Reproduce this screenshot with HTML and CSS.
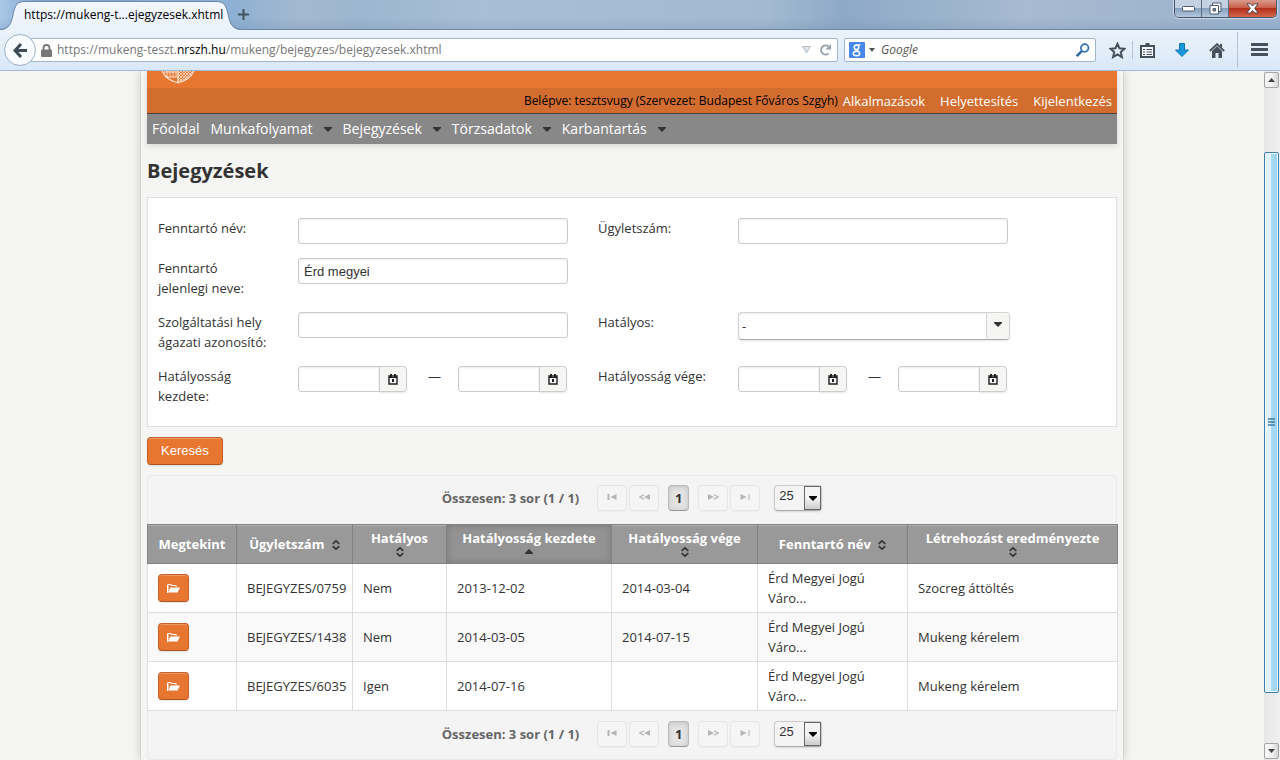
FILE: index.html
```html
<!DOCTYPE html>
<html lang="hu">
<head>
<meta charset="utf-8">
<title>Bejegyzések</title>
<link rel="stylesheet" href="styles.css">
</head>
<body>
<svg class="defs" aria-hidden="true">
  <symbol id="caret" viewBox="0 0 8 5"><path d="M0 0h8v1L4 5 0 1z"/></symbol>
  <symbol id="calendar" viewBox="0 0 10 11"><path d="M1 2h8v8H1z" fill="none" stroke="#222" stroke-width="1.400"/><path d="M2 0h2v3H2zM6 0h2v3H6zM1 3h8v1H1zM4 5h2v3H4z"/></symbol>
  <symbol id="folder" viewBox="0 0 13 9"><path d="M0 9V1l1-1h3l1 1h4.500v2H8.500V2H4.500l-1-1H1.500v5L.8 9z"/><path d="M3.500 3.500H13L10.500 8.500H1z"/></symbol>
  <symbol id="sort" viewBox="0 0 8 10"><path d="M.7 3.800 4 .8l3.300 3M.7 6.200l3.300 3 3.300-3" fill="none" stroke="#333" stroke-width="1.600"/></symbol>
  <symbol id="first" viewBox="0 0 10 6"><path d="M0 0h2v6H0zM9 0v6L3 3z"/></symbol>
  <symbol id="prev" viewBox="0 0 11 6"><path d="M5 .7 1 3l4 2.300" fill="none" stroke="#b5b5b5" stroke-width="1.300"/><path d="M11 0v6L5 3z"/></symbol>
  <symbol id="next" viewBox="0 0 11 6"><path d="M6 .7 10 3 6 5.300" fill="none" stroke="#b5b5b5" stroke-width="1.300"/><path d="M0 0v6l6-3z"/></symbol>
  <symbol id="last" viewBox="0 0 10 6"><path d="M8 0h1v6H8zM0 0v6l6-3z"/></symbol>
</svg>

<header class="browser">
  <div class="titlebar">
    <div class="tab">
      <svg class="tab-shape" width="242" height="30" viewBox="0 0 242 30" aria-hidden="true">
        <defs><linearGradient id="tabfill" x2="0" y2="1"><stop offset="0" stop-color="#f3f7fc"/><stop offset="1" stop-color="#eaf2fb"/></linearGradient></defs>
        <path d="M0 30C9 30 11 24 13 15 15 5 17 1.500 25 1.500H216C224 1.500 226 5 228 14 230 24 232 30 242 30z" fill="url(#tabfill)"/>
        <path d="M0 29.500C9 29 11 24 13 15 15 5 17 1.500 25 1.500H216C224 1.500 226 5 228 14 230 24 232 29 242 29.500" fill="none" stroke="#6c87a8"/>
      </svg>
      <span class="tab-title">https://mukeng-t...ejegyzesek.xhtml</span>
    </div>
    <button class="icon-btn newtab" aria-label="Új lap"><svg width="11" height="11" viewBox="0 0 11 11"><path d="M5.500 0v11M0 5.500h11" stroke="#40525f" stroke-width="2"/></svg></button>
    <div class="window-buttons">
      <button aria-label="Kis méret"><svg width="13" height="7" viewBox="0 0 13 7"><rect x=".5" y="1.500" width="12" height="4.500" rx="1" fill="#fff" stroke="#4c5b6f"/></svg></button>
      <button aria-label="Előző méret"><svg width="13" height="13" viewBox="0 0 13 13"><path d="M3.500 1h8.500v8.500H3.500z" fill="#fff" stroke="#4c5b6f"/><path d="M1 3.500h8.500V12H1z" fill="#fff" stroke="#4c5b6f"/><path d="M4 6.500h2.500V9H4z" fill="#7e95b3" stroke="#4c5b6f"/></svg></button>
      <button class="close" aria-label="Bezárás"><svg width="13" height="11" viewBox="0 0 13 11"><path d="M1 .8h3.500l2 2.200 2-2.200H12L8.700 5.300l3.500 4.700H8.500l-2-2.400-2 2.400H.8l3.500-4.700z" fill="#fff" stroke="#53414a"/></svg></button>
    </div>
  </div>
  <div class="toolbar">
    <button class="back" aria-label="Vissza"><svg width="15" height="15" viewBox="0 0 15 15"><path d="M8 1 2 7.500 8 14M2.500 7.500H14" fill="none" stroke="#3c4b57" stroke-width="3"/></svg></button>
    <div class="urlbar">
      <svg width="11" height="13" viewBox="0 0 11 13"><path d="M2.500 6V4a3 3 0 0 1 6 0v2" fill="none" stroke="#777" stroke-width="1.800"/><rect y="5.500" width="11" height="7.500" rx="1" fill="#777"/></svg>
      <span class="url">https://mukeng-teszt.<b>nrszh.hu</b>/mukeng/bejegyzes/bejegyzesek.xhtml</span>
      <svg width="9" height="8" viewBox="0 0 9 8"><path d="M.5.5h8L4.500 7z" fill="#dde2e6" stroke="#b5bdc4"/></svg>
      <button class="icon-btn" aria-label="Újratöltés"><svg width="12" height="12" viewBox="0 0 12 12"><path d="M9.500 9.500a4.500 4.500 0 1 1 0-7" fill="none" stroke="#98a2ad" stroke-width="2"/><path d="M12 0v5.500H6.500z" fill="#98a2ad"/></svg></button>
    </div>
    <label class="searchbar">
      <svg width="16" height="16" viewBox="0 0 16 16"><rect width="16" height="16" rx="1" fill="#4787ee"/><circle cx="7.500" cy="5.200" r="2.300" fill="none" stroke="#fff" stroke-width="1.500"/><ellipse cx="7.500" cy="11.500" rx="3.200" ry="2.200" fill="none" stroke="#fff" stroke-width="1.400"/><path d="M8 2.800h3.500M7 7.500c-1.500 1 2 1 2.500 2" fill="none" stroke="#fff" stroke-width="1.300"/></svg>
      <svg width="6" height="4" viewBox="0 0 6 4"><path d="M0 0h6L3 4z" fill="#555"/></svg>
      <input type="text" placeholder="Google" aria-label="Google keresés">
      <svg width="14" height="14" viewBox="0 0 14 14"><circle cx="8.700" cy="5" r="3.800" fill="none" stroke="#3a78b4" stroke-width="1.800"/><path d="M6 7.800.8 13" stroke="#2f6ba8" stroke-width="2.500"/></svg>
    </label>
    <div class="tools">
      <button class="icon-btn" aria-label="Könyvjelző"><svg width="17" height="17" viewBox="0 0 17 17"><path d="m8.500 1.800 2 4.500 5 .5-3.700 3.300 1.100 5-4.400-2.600-4.400 2.600 1.100-5L1.500 6.800l5-.5z" fill="none" stroke="#44505b" stroke-width="2"/></svg></button>
      <i class="tool-sep"></i>
      <button class="icon-btn" aria-label="Könyvjelzők"><svg width="15" height="15" viewBox="0 0 15 15"><path d="M1 3h13v11H1z" fill="#f4f8fc" stroke="#44505b" stroke-width="2"/><path d="M3 2h2l1-2h3l1 2h2v2H3z" fill="#44505b"/><path d="M3 6.500h2M6.500 6.500H12M3 9h2M6.500 9H12M3 11.500h2M6.500 11.500H12" stroke="#44505b"/></svg></button>
      <button class="icon-btn" aria-label="Letöltések"><svg width="14" height="14" viewBox="0 0 14 14"><path d="M4.500.5h5V7h4L7 13.500.5 7h4z" fill="#1898dc" stroke="#0c7abb"/></svg></button>
      <button class="icon-btn" aria-label="Kezdőlap"><svg width="16" height="15" viewBox="0 0 16 15"><path d="M.8 8 8 1.200 15.200 8" fill="none" stroke="#44505b" stroke-width="1.800"/><path d="M3 8l5-5 5 5v7H9.500v-5h-3v5H3zM11 1h2v4l-2-2z" fill="#44505b"/></svg></button>
    </div>
    <button class="icon-btn menu" aria-label="Menü"><svg width="17" height="14" viewBox="0 0 17 14"><path d="M1 1.500h15M1 6.500h15M1 11.500h15" stroke="#44505b" stroke-width="3" stroke-linecap="round"/></svg></button>
  </div>
</header>

<div class="viewport">
  <div class="scroll-area">
    <div class="page">
      <div class="banner">
        <div class="brand"><svg width="36" height="14" viewBox="0 0 36 14" aria-hidden="true">
          <defs><pattern id="hatch" width="3" height="3" patternUnits="userSpaceOnUse"><path d="M0 0l3 3M3 0L0 3" stroke="#fbe6d6" stroke-width=".8"/></pattern><pattern id="bars" width="3" height="6" patternUnits="userSpaceOnUse"><path d="M1 0v6" stroke="#f8d3b8"/></pattern></defs>
          <path d="M18 0h15Q28 10 18 11z" fill="url(#hatch)"/><path d="M4 0h14v6H5z" fill="url(#bars)"/>
          <path d="M2 0Q7 10 18 11.500 29 10 34 0M18 0v12.500M4 1h14M5 6h13" fill="none" stroke="#fbe6d6" stroke-width="1.200"/></svg></div>
        <div class="userbar">
          <span class="who">Belépve: tesztsvugy (Szervezet: Budapest Főváros Szgyh)</span>
          <a href="#">Alkalmazások</a><a href="#">Helyettesítés</a><a href="#">Kijelentkezés</a>
        </div>
        <nav class="nav">
          <a href="#">Főoldal</a>
          <a href="#">Munkafolyamat<svg class="caret"><use href="#caret"/></svg></a>
          <a href="#">Bejegyzések<svg class="caret"><use href="#caret"/></svg></a>
          <a href="#">Törzsadatok<svg class="caret"><use href="#caret"/></svg></a>
          <a href="#">Karbantartás<svg class="caret"><use href="#caret"/></svg></a>
        </nav>
      </div>

      <h1>Bejegyzések</h1>

      <form class="panel">
        <div class="row">
          <label for="f1">Fenntartó név:</label><div class="field"><input class="text" id="f1" type="text"></div>
          <label for="f2">Ügyletszám:</label><div class="field"><input class="text" id="f2" type="text"></div>
        </div>
        <div class="row">
          <label for="f3">Fenntartó jelenlegi neve:</label><div class="field"><input class="text" id="f3" type="text" value="Érd megyei"></div>
        </div>
        <div class="row">
          <label for="f4">Szolgáltatási hely ágazati azonosító:</label><div class="field"><input class="text" id="f4" type="text"></div>
          <label for="f5">Hatályos:</label>
          <div class="field"><div class="combo"><select id="f5"><option>-</option></select><span class="combo-arrow"><svg class="caret"><use href="#caret"/></svg></span></div></div>
        </div>
        <div class="row">
          <label for="f6">Hatályosság kezdete:</label>
          <div class="field range">
            <div class="date"><input id="f6" type="text"><button type="button" aria-label="Naptár"><svg class="cal"><use href="#calendar"/></svg></button></div>
            <span class="dash">—</span>
            <div class="date"><input type="text" aria-label="Hatályosság kezdete, vége"><button type="button" aria-label="Naptár"><svg class="cal"><use href="#calendar"/></svg></button></div>
          </div>
          <label for="f7">Hatályosság vége:</label>
          <div class="field range">
            <div class="date"><input id="f7" type="text"><button type="button" aria-label="Naptár"><svg class="cal"><use href="#calendar"/></svg></button></div>
            <span class="dash">—</span>
            <div class="date"><input type="text" aria-label="Hatályosság vége, vége"><button type="button" aria-label="Naptár"><svg class="cal"><use href="#calendar"/></svg></button></div>
          </div>
        </div>
      </form>

      <button class="primary search">Keresés</button>

      <section>
        <div class="pager pager-top">
          <span class="total">Összesen: 3 sor (1 / 1)</span>
          <div class="pages">
            <div class="pair"><button disabled aria-label="Első"><svg class="pg"><use href="#first"/></svg></button><button disabled aria-label="Előző"><svg class="pg"><use href="#prev"/></svg></button></div>
            <button class="current">1</button>
            <div class="pair"><button disabled aria-label="Következő"><svg class="pg"><use href="#next"/></svg></button><button disabled aria-label="Utolsó"><svg class="pg"><use href="#last"/></svg></button></div>
          </div>
          <div class="size"><select aria-label="Sorok száma"><option>25</option></select><span class="size-arrow"><svg class="caret"><use href="#caret"/></svg></span></div>
        </div>
        <table>
          <colgroup><col class="c1"><col class="c2"><col class="c3"><col class="c4"><col class="c5"><col class="c6"><col class="c7"></colgroup>
          <thead>
            <tr>
              <th>Megtekint</th>
              <th>Ügyletszám <svg class="sort"><use href="#sort"/></svg></th>
              <th class="stack">Hatályos <svg class="sort"><use href="#sort"/></svg></th>
              <th class="stack sorted">Hatályosság kezdete <svg class="sort up" viewBox="0 0 8 10"><path d="M0 7V6l4-4 4 4v1z"/></svg></th>
              <th class="stack">Hatályosság vége <svg class="sort"><use href="#sort"/></svg></th>
              <th>Fenntartó név <svg class="sort"><use href="#sort"/></svg></th>
              <th class="stack">Létrehozást eredményezte <svg class="sort"><use href="#sort"/></svg></th>
            </tr>
          </thead>
          <tbody>
            <tr><td><button class="primary view" aria-label="Megtekint"><svg class="folder"><use href="#folder"/></svg></button></td><td>BEJEGYZES/0759</td><td>Nem</td><td>2013-12-02</td><td>2014-03-04</td><td>Érd Megyei Jogú Váro...</td><td>Szocreg áttöltés</td></tr>
            <tr><td><button class="primary view" aria-label="Megtekint"><svg class="folder"><use href="#folder"/></svg></button></td><td>BEJEGYZES/1438</td><td>Nem</td><td>2014-03-05</td><td>2014-07-15</td><td>Érd Megyei Jogú Váro...</td><td>Mukeng kérelem</td></tr>
            <tr><td><button class="primary view" aria-label="Megtekint"><svg class="folder"><use href="#folder"/></svg></button></td><td>BEJEGYZES/6035</td><td>Igen</td><td>2014-07-16</td><td></td><td>Érd Megyei Jogú Váro...</td><td>Mukeng kérelem</td></tr>
          </tbody>
        </table>
        <div class="pager pager-bottom">
          <span class="total">Összesen: 3 sor (1 / 1)</span>
          <div class="pages">
            <div class="pair"><button disabled aria-label="Első"><svg class="pg"><use href="#first"/></svg></button><button disabled aria-label="Előző"><svg class="pg"><use href="#prev"/></svg></button></div>
            <button class="current">1</button>
            <div class="pair"><button disabled aria-label="Következő"><svg class="pg"><use href="#next"/></svg></button><button disabled aria-label="Utolsó"><svg class="pg"><use href="#last"/></svg></button></div>
          </div>
          <div class="size"><select aria-label="Sorok száma"><option>25</option></select><span class="size-arrow"><svg class="caret"><use href="#caret"/></svg></span></div>
        </div>
      </section>
    </div>
  </div>
  <div class="scrollbar" aria-hidden="true">
    <span class="sb-btn"><svg width="7" height="4" viewBox="0 0 7 4"><path d="M0 4h7L3.500 0z" fill="#444"/></svg></span>
    <span class="sb-before"></span>
    <span class="sb-thumb"><svg width="7" height="8" viewBox="0 0 7 8"><path d="M0 1h7M0 4h7M0 7h7" stroke="#3f7ea6" stroke-width="1.500"/></svg></span>
    <span class="sb-after"></span>
    <span class="sb-btn"><svg width="7" height="4" viewBox="0 0 7 4"><path d="M0 0h7L3.500 4z" fill="#444"/></svg></span>
  </div>
</div>
</body>
</html>
```
FILE: styles.css
```css
* { box-sizing: border-box; }
body {
  margin: 0;
  height: 100vh;
  display: flex;
  flex-direction: column;
  overflow: hidden;
  background: #f5f5f3;
  color: #333;
  font: 13px/20px "Open Sans", sans-serif;
}
button, input, select { font: inherit; margin: 0; }
button { padding: 0; }
svg { display: block; flex: none; }
.defs { position: absolute; width: 0; height: 0; }

/* browser window */
.browser { flex: none; font: 12px/20px "Open Sans", sans-serif; }
.titlebar {
  display: flex;
  align-items: stretch;
  height: 30px;
  border-bottom: 1px solid #6c87a8;
  background:
    linear-gradient(rgba(255,255,255,0) 60%, rgba(70,100,135,.12)),
    linear-gradient(90deg, #a9c8e8 0, #7fa3cb 40px, #8db0d3 230px, #a3b8d0 300px, #9db5d0 360px, #a8bed6 480px, #a2b9d1 60%, #8ea9c7 66%, #a6bad1 80%, #9fb5cd 92%, #9ab4d2);
}
.tab { position: relative; width: 242px; height: 30px; padding: 5px 24px; margin-right: -4px; }
.tab-shape { position: absolute; left: 0; top: 0; }
.tab-title { position: relative; display: block; color: #000; white-space: nowrap; }
.icon-btn { display: grid; place-items: center; border: 0; background: none; }
.newtab { width: 11px; }
.window-buttons { display: flex; height: 18px; margin: 0 3px 0 auto; border: 1px solid #47566d; border-top: 0; border-radius: 0 0 5px 5px; overflow: hidden; box-shadow: 0 0 1px 1px rgba(255,255,255,.5); }
.window-buttons button { display: grid; place-items: center; width: 27px; border: 0; border-right: 1px solid #5b6b80; background: linear-gradient(#c3d1e2 45%, #86a0be 50%, #b4c8de); }
.window-buttons button.close { width: 47px; border: 0; background: linear-gradient(#dc9b8c, #c8604c 45%, #b5301c 50%, #d4644a); }

.toolbar {
  display: flex;
  align-items: center;
  height: 41px;
  padding-left: 4px;
  border-bottom: 1px solid #a3b8d2;
  background: linear-gradient(#ebf3fc, #d9e8f7);
}
.back { display: grid; place-items: center; position: relative; z-index: 1; width: 32px; height: 32px; margin-right: -6px; border: 1px solid #9ab0c9; border-radius: 50%; background: #f8fbfe; }
.urlbar, .searchbar { display: flex; align-items: center; height: 24px; border: 1px solid #a2b5ca; border-radius: 2px; background: #fff; }
.urlbar { flex: 1; padding: 0 6px 0 10px; margin-right: 6px; }
.url { flex: 1; margin-left: 5px; color: #777; white-space: nowrap; }
.url b { color: #000; font-weight: 400; }
.urlbar .icon-btn { margin-left: 8px; }
.searchbar { width: 252px; gap: 6px; padding: 0 5px 0 4px; }
.searchbar input { flex: 1; min-width: 0; border: 0; padding: 0; outline: 0; background: none; }
.searchbar > svg:nth-of-type(2) { margin-left: -2px; }
.searchbar input::placeholder { color: #555; font-style: italic; opacity: 1; }
.tools { display: flex; align-items: center; margin: 0 11px 0 12px; }
.tools .icon-btn { width: 18px; height: 24px; }
.tools .icon-btn + .icon-btn { margin-left: 17px; }
.tool-sep { width: 1px; height: 18px; margin: 0 5px 0 6px; background: #b3c3d5; }
.menu { width: 43px; height: 36px; border-left: 1px solid #b3c3d5; }

/* document area */
.viewport { flex: 1; min-height: 0; display: flex; }
.scroll-area { flex: 1; overflow: hidden; }
.page {
  max-width: 982px;
  min-height: 100%;
  margin: 0 auto;
  padding: 0 6px;
  box-shadow: 0 0 10px rgba(0,0,0,.2), 0 0 1px rgba(0,0,0,.3);
}
.banner { box-shadow: 0 2px 6px rgba(0,0,0,.12); }
.brand { height: 17px; padding-left: 13px; background: #e77631; }
.userbar { display: flex; justify-content: flex-end; align-items: center; height: 26px; padding-right: 5px; background: #d26d2f; border-bottom: 1px solid #47423e; }
.userbar a { color: #fff; text-decoration: none; margin-left: 15px; }
.userbar .who { color: #000; font-size: 12px; }
.userbar .who + a { margin-left: 5px; }
.nav { display: flex; align-items: center; gap: 11px; height: 30px; padding-left: 5px; background: #888; font-size: 14px; }
.nav a { display: flex; align-items: center; color: #fff; text-decoration: none; }
.caret { width: 8px; height: 5px; fill: #333; }
.nav .caret { margin-left: 11px; }

h1 { margin: 12px 0 11px; font-size: 20px; line-height: 30px; }

.panel { padding: 13px 10px; border: 1px solid #ddd; background: #fff; }
.row { display: grid; grid-template-columns: 112px 270px 114px 272px; column-gap: 28px; padding: 7px 0; align-items: start; }
.row label:nth-of-type(2) { margin-left: 2px; }
.text, .date input { height: 26px; padding: 0 5px; border: 1px solid #ccc; border-radius: 3px; background: #fff; box-shadow: inset 0 1px 2px rgba(0,0,0,.08); color: #333; font-family: "Liberation Sans", sans-serif; }
.text { display: block; width: 270px; }
.range { display: flex; justify-content: space-between; max-width: 269px; }
.dash { margin-left: 4px; }
.date { display: flex; }
.date input { width: 82px; border-radius: 3px 0 0 3px; }
.date button { display: grid; place-items: center; width: 28px; height: 26px; margin-left: -1px; border: 1px solid #ccc; border-radius: 0 4px 4px 0; background: #f5f5f3; box-shadow: 0 1px 2px rgba(0,0,0,.1); }
.cal { width: 10px; height: 11px; fill: #222; }
.combo { display: grid; width: 272px; height: 28px; border: 1px solid #d2d2d2; border-bottom-color: #aaa; border-radius: 4px; box-shadow: 0 1px 2px rgba(0,0,0,.1), inset 0 1px 2px rgba(0,0,0,.08); }
.combo select, .size select { grid-area: 1 / 1; appearance: none; border: 0; padding: 0 3px; background: none; color: #333; }
.combo-arrow { grid-area: 1 / 1; justify-self: end; width: 23px; padding: 9px 0 0 7px; border-left: 1px solid #d2d2d2; border-radius: 3px; background: #f5f5f3; pointer-events: none; }

.primary { border: 1px solid #c5622a; border-bottom-color: #b0541f; border-radius: 4px; background: #e77631; color: #fff; box-shadow: inset 0 1px 0 rgba(255,255,255,.25), 0 1px 2px rgba(0,0,0,.1); font-family: "Liberation Sans", sans-serif; }
.search { display: block; margin: 10px 0; padding: 0 13px; height: 28px; }

.pager { display: flex; align-items: center; justify-content: center; height: 49px; border: 1px solid #eaeaea; background: #f4f4f4; color: #666; }
.pager-top { border-bottom: 0; border-radius: 4px 4px 0 0; padding-bottom: 4px; }
.pager-bottom { border-top: 0; border-radius: 0 0 4px 4px; padding-bottom: 2px; }
.total { font-weight: 700; margin-right: 18px; }
.pages { display: flex; gap: 9px; }
.pair { display: flex; gap: 2px; }
.pages button { display: grid; place-items: center; width: 30px; height: 26px; border: 1px solid #e6e6e6; border-radius: 4px; background: #f5f5f5; }
.pages button[disabled] { padding-bottom: 3px; box-shadow: 0 1px 1px rgba(0,0,0,.03); }
.pages .current { width: 21px; border-color: #bbb; border-bottom-color: #999; background: #e3e3e3; color: #333; font-weight: 700; box-shadow: inset 0 1px 5px rgba(0,0,0,.15); }
.pg { width: 11px; height: 6px; fill: #b5b5b5; }
.size { display: grid; width: 48px; height: 26px; margin-left: 14px; border: 1px solid #ccc; border-bottom-color: #aaa; border-radius: 4px; box-shadow: 0 1px 2px rgba(0,0,0,.12); }
.size select { padding: 0 4px 4px; font: 13px/20px "Liberation Sans", sans-serif; }
.size-arrow { grid-area: 1 / 1; justify-self: end; display: grid; place-items: center; width: 17px; height: 24px; border: 1px solid #666; background: linear-gradient(#f4f4f4 50%, #ccc); pointer-events: none; }
.size-arrow .caret { fill: #000; }

table { width: 100%; table-layout: fixed; border-collapse: collapse; background: #fff; }
.c1 { width: 89px; } .c2 { width: 116px; } .c3 { width: 94px; } .c4 { width: 165px; } .c5 { width: 146px; } .c6 { width: 150px; } .c7 { width: 210px; }
th { height: 39px; padding: 0 8px; border: 1px solid #828282; background: #999; color: #fff; text-align: center; vertical-align: middle; line-height: 20px; box-shadow: inset 0 1px 0 #b0b0b0; }
th.stack { line-height: 18px; white-space: nowrap; padding: 4px 0 6px; }
th.sorted { background: #939393; box-shadow: inset 0 0 6px #777; }
.sort { display: inline-block; width: 8px; height: 10px; margin-left: 4px; fill: #333; vertical-align: -1px; }
.stack .sort { display: block; margin: 0 auto; }
td { height: 49px; padding: 4px 10px; border: 1px solid #ddd; vertical-align: middle; }
tbody tr:nth-child(even) { background: #f9f9f9; }
.view { display: grid; place-items: center; width: 31px; height: 28px; }
.folder { width: 13px; height: 9px; fill: #fff; }

.scrollbar { flex: none; display: flex; flex-direction: column; width: 16px; padding: 1px 1px 1px 0; background: linear-gradient(90deg, #e6e6e6, #f1f1f1); }
.sb-btn { display: grid; place-items: center; height: 16px; border: 1px solid #a5a5a5; border-radius: 2px; background: linear-gradient(90deg, #f5f5f5 50%, #d5d5d5); }
.sb-before { flex: 64; }
.sb-thumb { flex: 541; display: grid; place-items: center; border: 1px solid #3c7fb1; border-radius: 2px; background: linear-gradient(90deg, #e0f2fc 45%, #a9dbf5 50%, #9dd0ee); box-shadow: inset 0 0 0 1px #f2fafe; }
.sb-after { flex: 50; }
```
